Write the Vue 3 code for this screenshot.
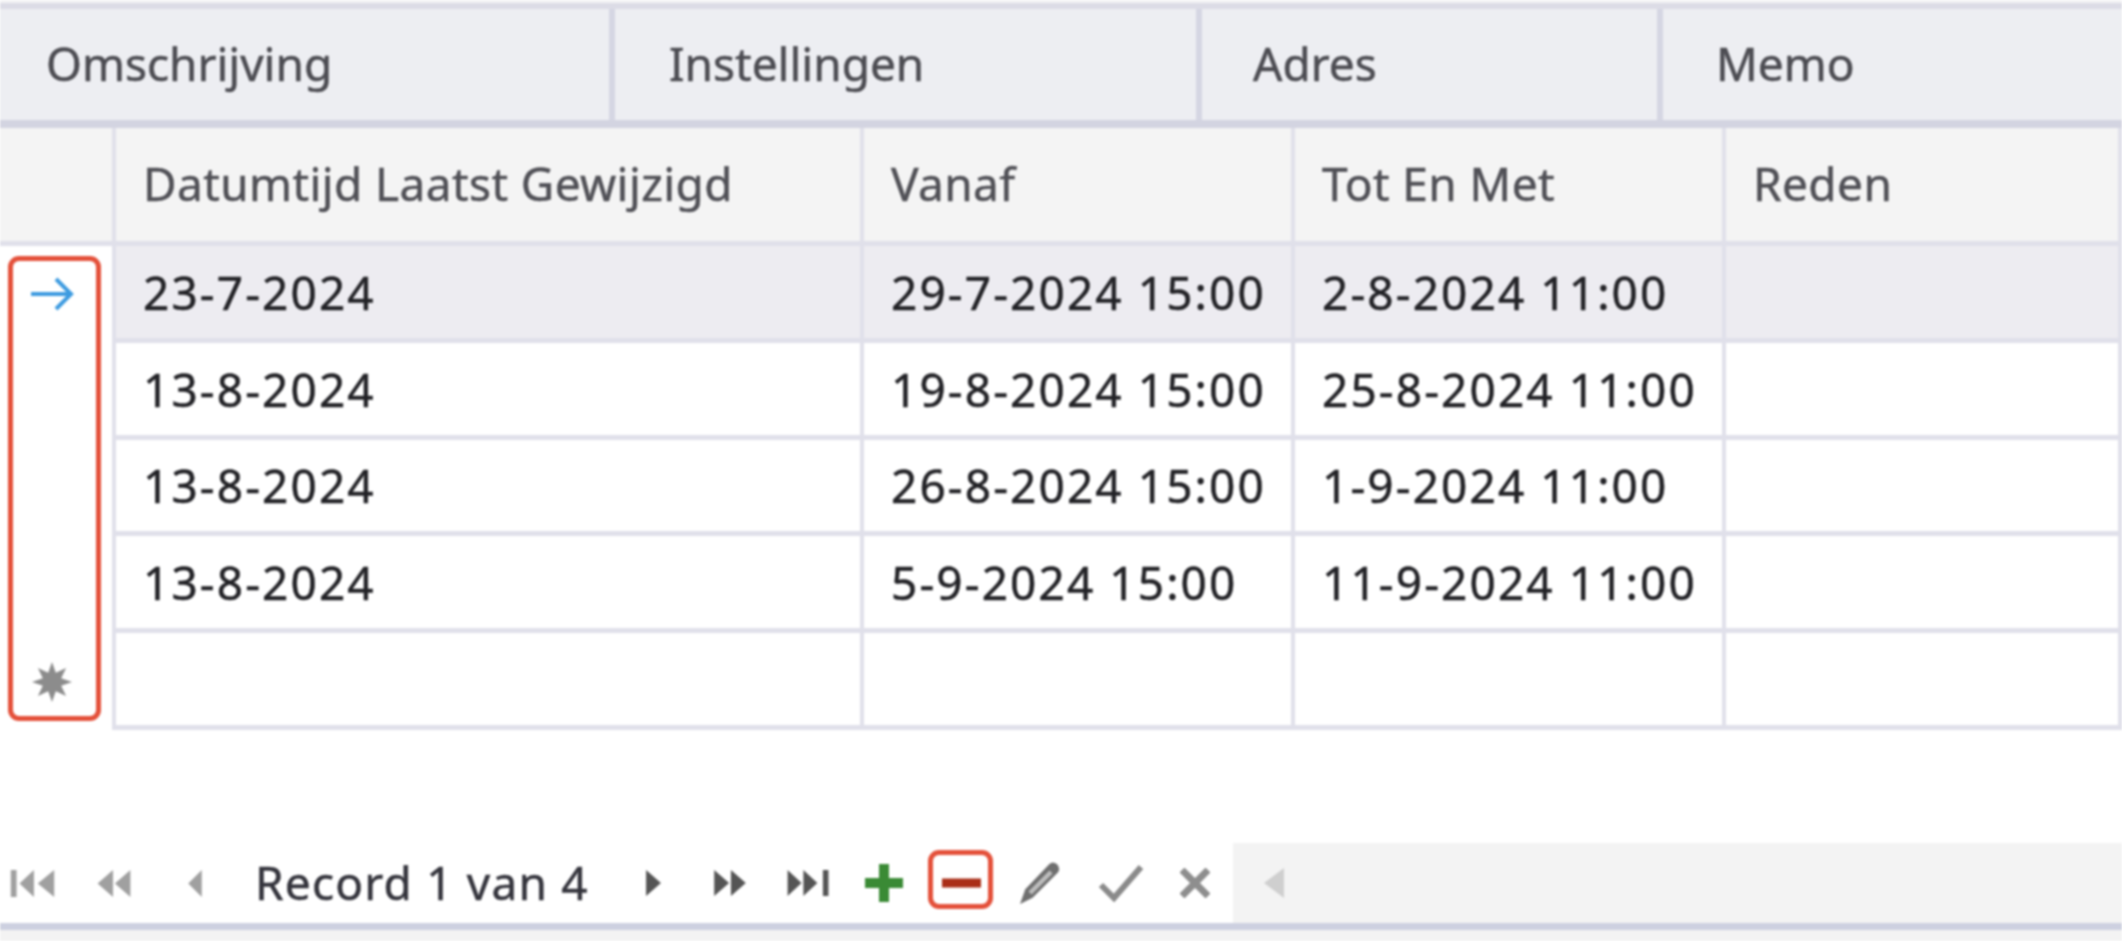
<template>
  <div class="page">
    <div class="strip"></div>
    <div class="tabs">
      <div v-for="tab in tabs" :key="tab" class="tab">{{ tab }}</div>
    </div>

    <div class="grid">
      <div class="cell head indicator"></div>
      <div v-for="col in columns" :key="col" class="cell head">{{ col }}</div>

      <template v-for="(row, i) in rows" :key="i">
        <div class="indicator">
          <svg v-if="row.current" class="arrow" width="44" height="36" viewBox="0 0 44 36">
            <path d="M1 18H41M26 3L41 18L26 33" fill="none" stroke="#3d9be0" stroke-width="4" />
          </svg>
          <svg v-if="row.isNew" class="star" width="42" height="42" viewBox="0 0 42 42">
            <path d="M21 1L24.8 11.8L35.1 6.9L30.2 17.2L41 21L30.2 24.8L35.1 35.1L24.8 30.2L21 41L17.2 30.2L6.9 35.1L11.8 24.8L1 21L11.8 17.2L6.9 6.9L17.2 11.8Z" fill="#8c8c8c" />
          </svg>
        </div>
        <div v-for="(val, j) in row.cells" :key="j" class="cell value" :class="{ selected: row.current }">{{ val }}</div>
      </template>

      <div class="mark mark-rows"></div>
    </div>

    <div class="spacer"></div>

    <div class="nav">
      <div class="btn">
        <svg width="45" height="27" viewBox="0 0 45 28" fill="#a0a0a0"><path d="M0 0H6V28H0ZM24 0V28L9 14ZM45 0V28L28 14Z" /></svg>
      </div>
      <div class="btn">
        <svg width="34" height="27" viewBox="0 0 34 28" fill="#a0a0a0"><path d="M16 0V28L0 14ZM34 0V28L18 14Z" /></svg>
      </div>
      <div class="btn">
        <svg width="14" height="27" viewBox="0 0 14 28" fill="#a0a0a0"><path d="M14 0V28L0 14Z" /></svg>
      </div>
      <div class="record">Record 1 van 4</div>
      <div class="btn">
        <svg width="15" height="26" viewBox="0 0 16 28" fill="#555"><path d="M0 0V28L16 14Z" /></svg>
      </div>
      <div class="btn">
        <svg width="34" height="26" viewBox="0 0 34 28" fill="#555"><path d="M0 0V28L16 14ZM18 0V28L34 14Z" /></svg>
      </div>
      <div class="btn">
        <svg width="45" height="26" viewBox="0 0 45 28" fill="#555"><path d="M0 0V28L15 14ZM17 0V28L32 14ZM38 0H44V28H38Z" /></svg>
      </div>
      <div class="btn">
        <svg width="38" height="38" viewBox="0 0 38 38"><path d="M19 0V38M0 19H38" stroke="#3a8a35" stroke-width="10" fill="none" /></svg>
      </div>
      <div class="btn">
        <svg width="39" height="10" viewBox="0 0 39 10"><path d="M0 5H39" stroke="#aa2e17" stroke-width="9" fill="none" /></svg>
        <div class="mark mark-minus"></div>
      </div>
      <div class="btn">
        <svg width="42" height="42" viewBox="0 0 38 40">
          <path d="M0 40L5 26L28 2Q31 -1 35 2Q39 6 36 10L12 34Z" fill="#6f6f6f" />
          <path d="M8 28L28 8L31 11L11 31Z" fill="#bdbdbd" />
        </svg>
      </div>
      <div class="btn">
        <svg width="50" height="38" viewBox="0 0 44 38"><path d="M2 21L15 34L42 3" stroke="#8a8a8a" stroke-width="6" fill="none" /></svg>
      </div>
      <div class="btn">
        <svg width="30" height="30" viewBox="0 0 30 30"><path d="M2 2L28 28M28 2L2 28" stroke="#8e8e8e" stroke-width="7" fill="none" /></svg>
      </div>
      <div class="scroll">
        <svg width="22" height="30" viewBox="0 0 20 30" fill="#cfcfcf"><path d="M20 0V30L0 15Z" /></svg>
      </div>
    </div>
    <div class="foot"></div>
  </div>
</template>

<script setup>
const tabs = ['Omschrijving', 'Instellingen', 'Adres', 'Memo']
const columns = ['Datumtijd Laatst Gewijzigd', 'Vanaf', 'Tot En Met', 'Reden']

const rows = [
  { current: true, cells: ['23-7-2024', '29-7-2024 15:00', '2-8-2024 11:00', ''] },
  { cells: ['13-8-2024', '19-8-2024 15:00', '25-8-2024 11:00', ''] },
  { cells: ['13-8-2024', '26-8-2024 15:00', '1-9-2024 11:00', ''] },
  { cells: ['13-8-2024', '5-9-2024 15:00', '11-9-2024 11:00', ''] },
  { isNew: true, cells: ['', '', '', ''] },
]
</script>

<style>
html,
body {
  margin: 0;
  background: #fff;
  overflow: hidden;
}
</style>

<style scoped>
.page {
  width: 2122px;
  height: 941px;
  display: flex;
  flex-direction: column;
  background: #fff;
  font-family: "Noto Sans", "Open Sans", sans-serif;
  font-size: 46px;
  color: #222226;
  -webkit-text-stroke: 0.5px currentColor;
  filter: blur(0.9px);
  overflow: hidden;
}

.strip {
  height: 3px;
  background: #f3f3f5;
}

.tabs {
  height: 111px;
  display: grid;
  grid-template-columns: 615px 587px 461px 1fr;
  border-top: 6px solid #dcdce6;
  border-bottom: 8px solid #d3d4e1;
  background: #edeef2;
  color: #4c4c52;
}

.tab {
  display: flex;
  align-items: center;
  padding-left: 46px;
  padding-bottom: 4px;
  border-right: 6px solid #d5d6e3;
  box-sizing: border-box;
}

.tab:nth-child(2) {
  padding-left: 54px;
}

.tab:nth-child(3) {
  padding-left: 51px;
}

.tab:nth-child(4) {
  border-right: 0;
  padding-left: 53px;
}

.grid {
  position: relative;
  display: grid;
  grid-template-columns: 116px 748px 431px 431px 1fr;
  grid-template-rows: 118px repeat(5, 96.8px);
}

.cell {
  display: flex;
  align-items: center;
  padding-left: 27px;
  box-sizing: border-box;
  border-right: 4px solid #e0e0ea;
  border-bottom: 5px solid #e0e0ea;
  white-space: nowrap;
}

.cell:nth-child(5n + 1) {
  border-right: 0;
}

.value {
  letter-spacing: 2.1px;
}

.head {
  background: #f4f4f4;
  color: #505056;
  letter-spacing: 0.4px;
  padding-bottom: 4px;
}

.selected {
  background: #edecf1;
}

.indicator {
  display: flex;
  align-items: center;
  justify-content: center;
  padding-right: 9px;
  box-sizing: border-box;
  border-right: 4px solid #e0e0ea;
}

.head.indicator {
  padding: 0;
  border-right: 4px solid #e0e0ea;
  border-bottom: 5px solid #e0e0ea;
}

.mark {
  position: absolute;
  border: 5px solid #e4503a;
  border-radius: 11px;
  box-sizing: border-box;
}

.mark-rows {
  left: 8px;
  top: 128px;
  width: 93px;
  height: 465px;
}

.spacer {
  flex: 1;
}

.nav {
  height: 87px;
  box-sizing: border-box;
  display: grid;
  grid-template-columns: 64px 100px 62px 394px 66px 88px 68px 84px 70px 88px 73px 76px 1fr;
  border-bottom: 7px solid #cdd0e0;
}

.btn {
  position: relative;
  display: flex;
  align-items: center;
  justify-content: center;
}

.record {
  display: flex;
  align-items: center;
  padding-left: 29px;
  letter-spacing: 1.2px;
  color: #34343c;
  padding-bottom: 3px;
  white-space: nowrap;
}

.mark-minus {
  left: 2px;
  top: 7px;
  width: 65px;
  height: 59px;
}

.scroll {
  display: flex;
  align-items: center;
  padding-left: 30px;
  background: #f3f3f3;
}

.foot {
  height: 11px;
  background: #f3f3f3;
}
</style>
